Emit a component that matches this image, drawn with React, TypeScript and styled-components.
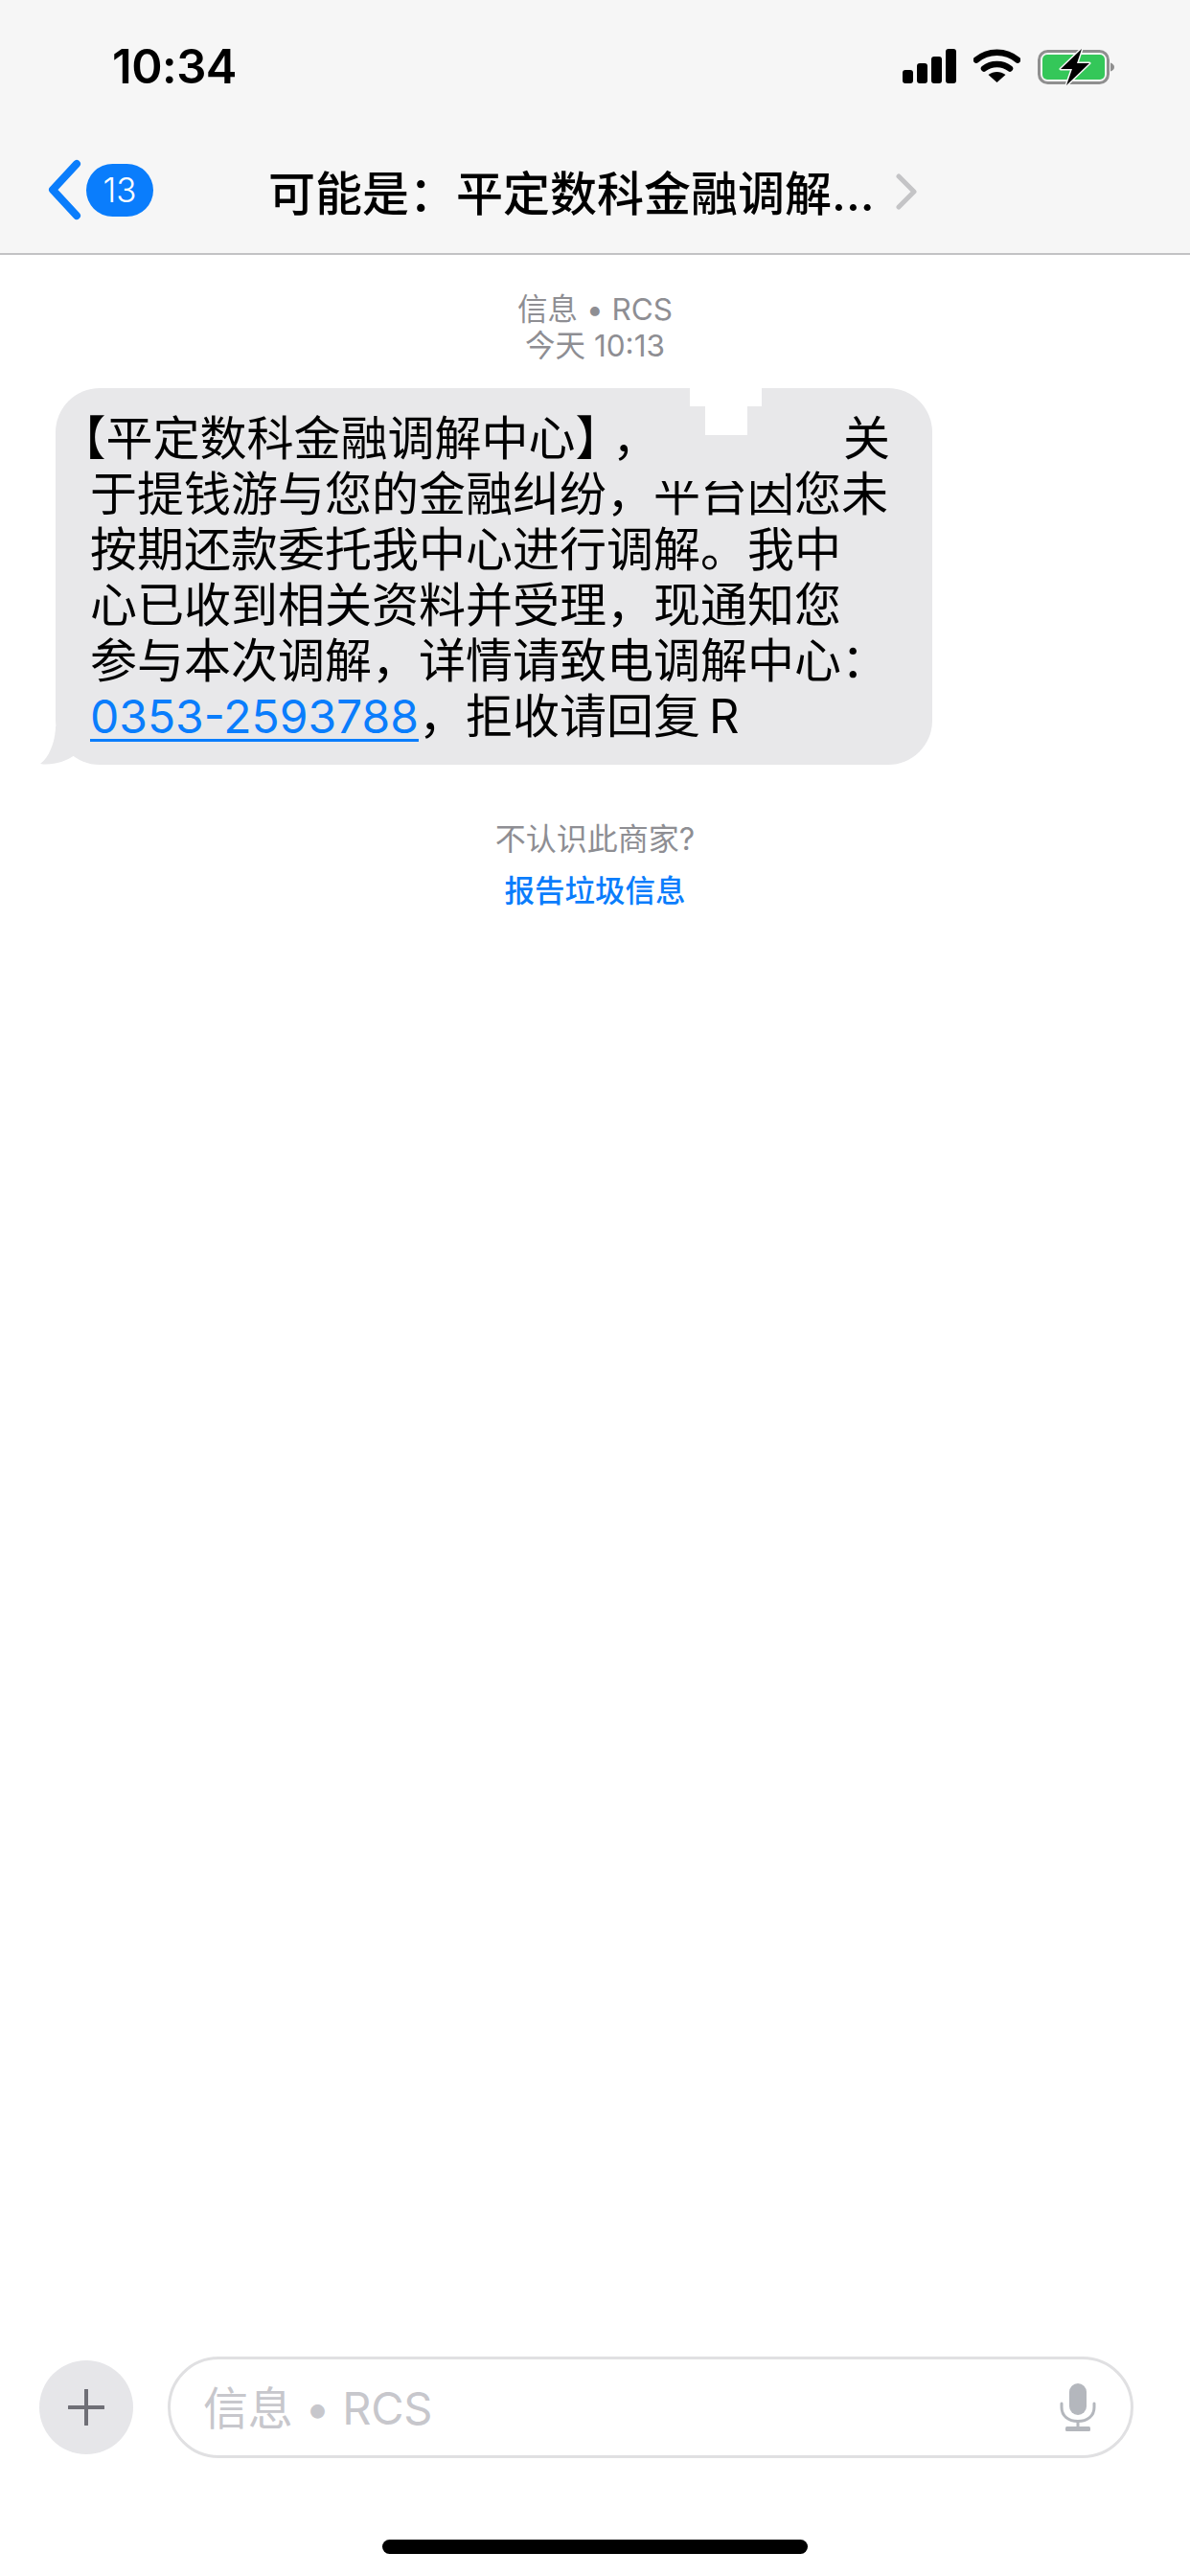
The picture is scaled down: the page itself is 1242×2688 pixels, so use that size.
import React from 'react';
import styled, { createGlobalStyle } from 'styled-components';

const GlobalStyle = createGlobalStyle`
  html, body {
    margin: 0;
    padding: 0;
    background: #fff;
  }
  * {
    box-sizing: border-box;
  }
`;

const cjk = `Inter, "Noto Sans CJK SC", sans-serif`;
const COMMA = '\uFF0C';
const COLON = '\uFF1A';

const Screen = styled.div`
  width: 1242px;
  height: 2688px;
  display: flex;
  flex-direction: column;
  background: #fff;
  font-family: ${cjk};
  overflow: hidden;
`;

const Header = styled.header`
  height: 266px;
  flex: none;
  background: #f6f6f6;
  border-bottom: 2px solid #c2c2c4;
`;

const StatusBar = styled.div`
  height: 116px;
  padding: 45px 79px 0 117px;
  display: flex;
  align-items: flex-start;
  justify-content: space-between;
`;

const Clock = styled.div`
  font-size: 49px;
  line-height: 50px;
  font-weight: 600;
  color: #000;
  letter-spacing: -0.5px;
`;

const StatusIcons = styled.div`
  display: flex;
  align-items: flex-start;
  gap: 18px;
  margin-top: 6px;
`;

const NavBar = styled.nav`
  height: 148px;
  padding: 16px 0 0 49px;
  display: flex;
  align-items: center;
`;

const BackChevron = styled.svg`
  width: 36px;
  height: 64px;
  flex: none;
`;

const CountBadge = styled.div`
  width: 70px;
  height: 55px;
  margin-left: 5px;
  border-radius: 28px;
  background: #0a7dfc;
  color: #fff;
  font-size: 35px;
  font-weight: 300;
  display: flex;
  align-items: center;
  justify-content: center;
  flex: none;
`;

const Title = styled.div`
  margin-left: 120px;
  width: 654px;
  font-size: 49px;
  font-weight: 500;
  color: #000;
  white-space: nowrap;
`;

const NextChevron = styled.svg`
  width: 24px;
  height: 38px;
  margin-top: 3px;
  flex: none;
`;

const Thread = styled.main`
  flex: 1;
  display: flex;
  flex-direction: column;
  padding-top: 38px;
`;

const Meta = styled.div`
  text-align: center;
  font-size: 31.5px;
  line-height: 38px;
  color: #8e8e93;
`;

const BubbleRow = styled.div`
  margin-top: 25px;
  padding-left: 58px;
  position: relative;
`;

const Bubble = styled.div`
  width: 915px;
  height: 393px;
  padding: 24px 0 0 36px;
  border-radius: 46px;
  background: #e8e8ea;
  position: relative;
`;

const BubbleTail = styled.svg`
  position: absolute;
  left: 42px;
  bottom: 0;
  width: 40px;
  height: 40px;
`;

const Line = styled.div`
  height: 58px;
  font-size: 49px;
  line-height: 58px;
  color: #000;
  white-space: nowrap;
`;

const OpenBracket = styled.span`
  font-feature-settings: "halt";
  margin-left: -8px;
`;

const Halt = styled.span`
  font-feature-settings: "halt";
`;

const LineGap = styled.span<{ $width: number }>`
  display: inline-block;
  width: ${({ $width }) => $width}px;
`;

const PhoneLink = styled.span`
  color: #0a7dfc;
  font-size: 48px;
  text-decoration: underline;
  text-decoration-thickness: 3px;
  text-underline-offset: 6px;
`;

// white patches left over from the redaction on top of the bubble
const RedactTop = styled.div`
  position: absolute;
  left: 662px;
  top: 0;
  width: 75px;
  height: 19px;
  background: #fff;
`;

const RedactStem = styled.div`
  position: absolute;
  left: 678px;
  top: 19px;
  width: 44px;
  height: 30px;
  background: #fff;
`;

const RedactSmear = styled.div`
  position: absolute;
  left: 622px;
  top: 84px;
  width: 140px;
  height: 13px;
  background: #e8e8ea;
`;

const Notice = styled.div`
  margin-top: 58px;
  text-align: center;
  font-size: 32px;
  line-height: 40px;
  color: #8e8e93;
`;

const ReportLink = styled.div`
  margin-top: 14px;
  text-align: center;
  font-size: 31.5px;
  line-height: 40px;
  font-weight: 500;
  color: #0a7dfc;
`;

const Composer = styled.div`
  flex: none;
  padding: 0 59px 0 41px;
  display: flex;
  align-items: center;
  gap: 36px;
`;

const PlusButton = styled.div`
  width: 98px;
  height: 98px;
  border-radius: 50%;
  background: #e6e6e9;
  display: flex;
  align-items: center;
  justify-content: center;
  flex: none;
`;

const InputPill = styled.div`
  flex: 1;
  height: 106px;
  border: 3px solid #e0e0e2;
  border-radius: 53px;
  padding: 0 36px 0 34px;
  display: flex;
  align-items: center;
  justify-content: space-between;
`;

const Placeholder = styled.span`
  font-size: 47px;
  letter-spacing: -0.3px;
  color: #c7c7cc;
  margin-top: -5px;
`;

const HomeRow = styled.div`
  flex: none;
  height: 123px;
  padding-top: 85px;
  display: flex;
  justify-content: center;
`;

const HomeBar = styled.div`
  width: 444px;
  height: 15px;
  border-radius: 8px;
  background: #000;
`;

function SignalIcon() {
  return (
    <svg width="56" height="36" viewBox="0 0 56 36">
      <rect x="0" y="22" width="11" height="14" rx="3" fill="#000" />
      <rect x="15" y="15" width="11" height="21" rx="3" fill="#000" />
      <rect x="30" y="8" width="11" height="28" rx="3" fill="#000" />
      <rect x="45" y="0" width="11" height="36" rx="3" fill="#000" />
    </svg>
  );
}

function WifiIcon() {
  return (
    <svg width="49" height="35" viewBox="0 0 49 35">
      <path d="M3 11.5C15 1 34 1 46 11.5" fill="none" stroke="#000" strokeWidth="6.5" strokeLinecap="round" />
      <path d="M11 20.5C18.5 14.5 30.5 14.5 38 20.5" fill="none" stroke="#000" strokeWidth="6.5" strokeLinecap="round" />
      <path d="M15.5 27C21 23 28 23 33.5 27L24.5 35Z" fill="#000" />
    </svg>
  );
}

function BatteryIcon() {
  return (
    <svg width="80" height="38" viewBox="0 0 80 38">
      <rect x="1.5" y="2.5" width="72" height="33" rx="9" fill="none" stroke="#8f8f8f" strokeWidth="3" />
      <rect x="5" y="6" width="65" height="26" rx="5" fill="#34c759" />
      <path d="M76 14.5C78.5 15.5 80 17 80 19C80 21 78.5 22.5 76 23.5Z" fill="#8f8f8f" />
      <path
        d="M46 0L24 21H36L30 38L54 15H41L46 0Z"
        fill="#000"
        stroke="#f6f6f6"
        strokeWidth="3"
        strokeLinejoin="round"
        paintOrder="stroke"
      />
    </svg>
  );
}

function MicIcon() {
  return (
    <svg width="38" height="50" viewBox="0 0 38 50">
      <rect x="10" y="0" width="18" height="33" rx="9" fill="#b4b7bd" />
      <path d="M2 21V25C2 34 9 39.5 19 39.5C29 39.5 36 34 36 25V21" fill="none" stroke="#b4b7bd" strokeWidth="3" strokeLinecap="round" />
      <rect x="17.5" y="39" width="3" height="7" fill="#b4b7bd" />
      <rect x="6" y="45" width="26" height="5" rx="1.5" fill="#b4b7bd" />
    </svg>
  );
}

export default function App() {
  return (
    <Screen>
      <GlobalStyle />
      <Header>
        <StatusBar>
          <Clock>10:34</Clock>
          <StatusIcons>
            <SignalIcon />
            <WifiIcon />
            <BatteryIcon />
          </StatusIcons>
        </StatusBar>
        <NavBar>
          <BackChevron viewBox="0 0 36 64">
            <path d="M31 5L6 32L31 59" fill="none" stroke="#0a7dfc" strokeWidth="8" strokeLinecap="round" strokeLinejoin="round" />
          </BackChevron>
          <CountBadge>13</CountBadge>
          <Title>可能是{COLON}平定数科金融调解...</Title>
          <NextChevron viewBox="0 0 24 38">
            <path d="M4 3L20 19L4 35" fill="none" stroke="#c4c4c6" strokeWidth="5" strokeLinecap="round" strokeLinejoin="round" />
          </NextChevron>
        </NavBar>
      </Header>

      <Thread>
        <Meta>信息 • RCS</Meta>
        <Meta>今天 10:13</Meta>
        <BubbleRow>
          <BubbleTail viewBox="0 0 40 40">
            <path d="M16 0C16 14 10 32 0 39C12 41 26 37 36 30L40 0Z" fill="#e8e8ea" />
          </BubbleTail>
          <Bubble>
            <Line>
              <OpenBracket>【</OpenBracket>平定数科金融调解中心<Halt>】</Halt>
              <LineGap $width={14} />{COMMA}<LineGap $width={192} />关
            </Line>
            <Line>于提钱游与您的金融纠纷{COMMA}平台因您未</Line>
            <Line>按期还款委托我中心进行调解。我中</Line>
            <Line>心已收到相关资料并受理{COMMA}现通知您</Line>
            <Line>参与本次调解{COMMA}详情请致电调解中心{COLON}</Line>
            <Line>
              <PhoneLink>0353-2593788</PhoneLink>{COMMA}拒收请回复{'\u2009'}R
            </Line>
            <RedactTop />
            <RedactStem />
            <RedactSmear />
          </Bubble>
        </BubbleRow>
        <Notice>不认识此商家?</Notice>
        <ReportLink>报告垃圾信息</ReportLink>
      </Thread>

      <Composer>
        <PlusButton>
          <svg width="38" height="38" viewBox="0 0 38 38">
            <path d="M19 1V37M1 19H37" stroke="#6f6f76" strokeWidth="4" strokeLinecap="round" />
          </svg>
        </PlusButton>
        <InputPill>
          <Placeholder>信息 • RCS</Placeholder>
          <MicIcon />
        </InputPill>
      </Composer>
      <HomeRow>
        <HomeBar />
      </HomeRow>
    </Screen>
  );
}
